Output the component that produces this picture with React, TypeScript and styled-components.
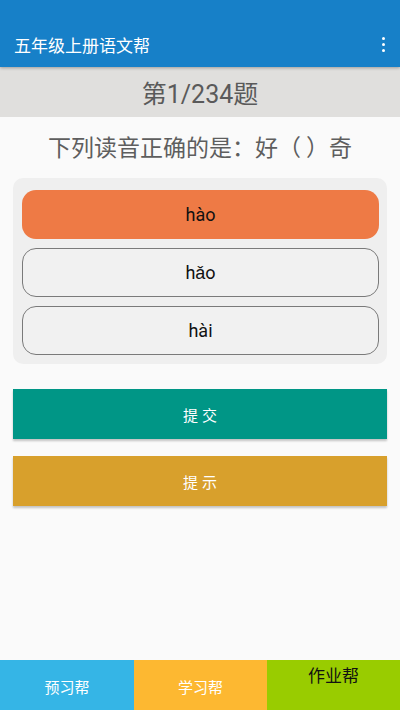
import React from "react";
import styled, { createGlobalStyle } from "styled-components";

const Global = createGlobalStyle`
  html, body { margin: 0; padding: 0; }
  body { font-family: Roboto, "Noto Sans CJK SC", sans-serif; background: #fafafa; }
  #root { height: 710px; }
`;

const Page = styled.div`
  width: 400px;
  height: 710px;
  display: flex;
  flex-direction: column;
  background: #fafafa;
  overflow: hidden;
`;

const AppBar = styled.header`
  height: 67px;
  background: #1780c8;
  display: flex;
  align-items: flex-end;
  box-shadow: 0 1px 3px rgba(0,0,0,0.3);
  position: relative;
  z-index: 1;
`;

const AppBarRow = styled.div`
  height: 43px;
  width: 100%;
  display: flex;
  align-items: center;
  justify-content: space-between;
  padding: 0 12px 0 14px;
  box-sizing: border-box;
`;

const Title = styled.div`
  color: #fff;
  font-size: 17px;
  font-family: "Noto Sans CJK SC", sans-serif;
  margin-top: -2px;
`;

const Dots = styled.div`
  display: flex;
  flex-direction: column;
  gap: 2.5px;
  margin-right: 3px;
  margin-top: -2px;
`;

const Dot = styled.span`
  width: 3.5px;
  height: 3.5px;
  border-radius: 50%;
  background: #fff;
`;

const Counter = styled.div`
  height: 50px;
  background: #e0dfdd;
  display: flex;
  align-items: center;
  justify-content: center;
  color: #5a5a5a;
  font-size: 25px;
  font-family: Roboto, "Noto Sans CJK SC", sans-serif;
`;

const Question = styled.div`
  text-align: center;
  color: #5e5e5e;
  font-size: 23px;
  font-family: "Noto Sans CJK SC", sans-serif;
  padding-top: 12px;
  height: 49px;
  box-sizing: border-box;
  line-height: 34px;
  text-spacing-trim: space-all;
  white-space: pre;
`;

const Options = styled.div`
  margin: 12px 13px 0;
  background: #efefef;
  border-radius: 10px;
  padding: 12px 8px 9px 9px;
  display: flex;
  flex-direction: column;
  gap: 9px;
`;

const Option = styled.div<{ $selected?: boolean }>`
  height: 49px;
  box-sizing: border-box;
  border-radius: 14px;
  display: flex;
  align-items: center;
  justify-content: center;
  font-size: 18px;
  font-family: Roboto, sans-serif;
  color: #111;
  background: ${(p) => (p.$selected ? "#ee7a45" : "#f1f1f1")};
  border: ${(p) => (p.$selected ? "none" : "1.5px solid #7a7a7a")};
`;

const ActionButton = styled.div<{ $color: string; $top: number }>`
  margin: ${(p) => p.$top}px 13px 0;
  height: 50px;
  background: ${(p) => p.$color};
  color: #fff;
  display: flex;
  align-items: center;
  justify-content: center;
  font-size: 15px;
  letter-spacing: 4px;
  padding-left: 4px;
  font-family: "Noto Sans CJK SC", sans-serif;
  box-shadow: 0 2px 2px rgba(0,0,0,0.22);
`;

const Spacer = styled.div`
  flex: 1;
`;

const BottomNav = styled.nav`
  height: 50px;
  display: grid;
  grid-template-columns: 134px 133px 133px;
`;

const NavItem = styled.div<{ $bg: string; $dark?: boolean }>`
  background: ${(p) => p.$bg};
  color: ${(p) => (p.$dark ? "#111" : "#fff")};
  display: flex;
  justify-content: center;
  align-items: ${(p) => (p.$dark ? "flex-start" : "center")};
  padding-top: 2px;
  box-sizing: border-box;
  font-size: ${(p) => (p.$dark ? "17px" : "15px")};
  font-family: "Noto Sans CJK SC", sans-serif;
`;

export default function App() {
  return (
    <Page>
      <Global />
      <AppBar>
        <AppBarRow>
          <Title>五年级上册语文帮</Title>
          <Dots>
            <Dot />
            <Dot />
            <Dot />
          </Dots>
        </AppBarRow>
      </AppBar>
      <Counter>第1/234题</Counter>
      <Question>下列读音正确的是：好（ ）奇</Question>
      <Options>
        <Option $selected>hào</Option>
        <Option>hǎo</Option>
        <Option>hài</Option>
      </Options>
      <ActionButton $color="#009686" $top={25}>提交</ActionButton>
      <ActionButton $color="#d8a02c" $top={17}>提示</ActionButton>
      <Spacer />
      <BottomNav>
        <NavItem $bg="#35b5e6">预习帮</NavItem>
        <NavItem $bg="#fdb831">学习帮</NavItem>
        <NavItem $bg="#99cc00" $dark>作业帮</NavItem>
      </BottomNav>
    </Page>
  );
}
